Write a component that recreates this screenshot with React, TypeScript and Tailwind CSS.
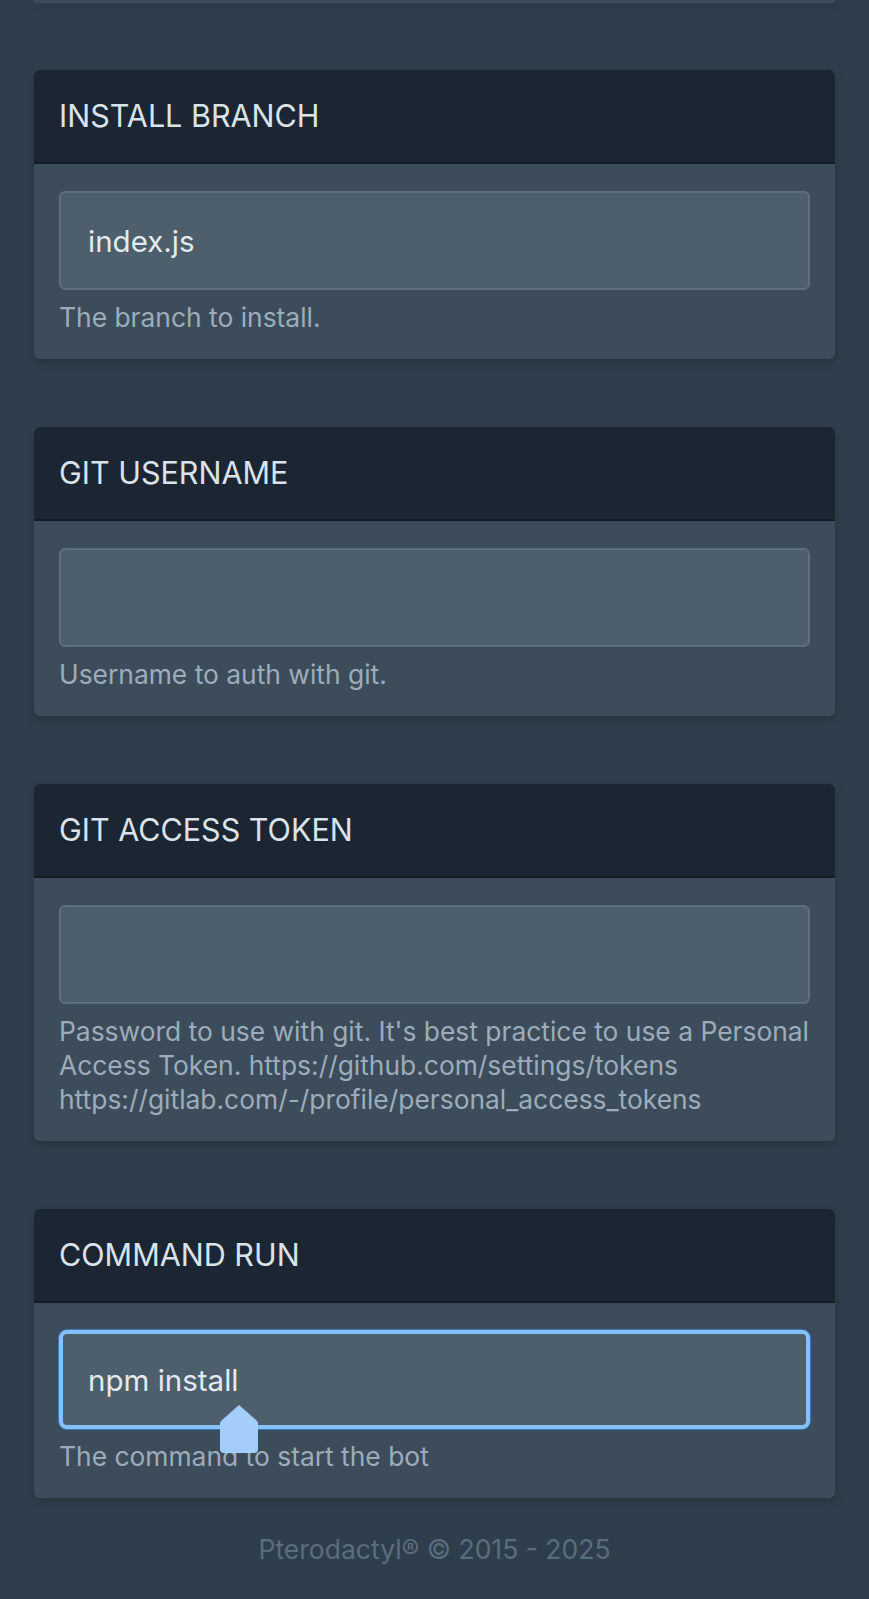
import { ReactNode } from "react";

type FieldProps = {
  title: string;
  value?: string;
  help: ReactNode;
  focused?: boolean;
};

function Field({ title, value, help, focused }: FieldProps) {
  return (
    <div className="rounded-[6px] bg-[#3c4c5a] shadow-[0_4px_10px_rgba(0,0,0,0.18)] overflow-visible">
      <div className="h-[94px] flex items-center px-[25px] bg-[#1b2632] rounded-t-[6px] border-b-2 border-[#131c25]">
        <h3 className="text-[30.5px] text-[#dbe3ea]">{title}</h3>
      </div>
      <div className="px-[25px] pt-[27px] pb-[25px]">
        <div className="relative">
          <input
            type="text"
            defaultValue={value}
            readOnly
            className={
              focused
                ? "w-full h-[99px] rounded-[8px] bg-[#4d5e6d] border-4 border-[#85c0fa] ring-1 ring-[#3d78b5] px-[25px] text-[29.5px] text-[#e4eaef] outline-none"
                : "w-full h-[99px] rounded-[6px] bg-[#4d5e6d] border-2 border-[#5d6e7d] px-[27px] text-[29.5px] text-[#e4eaef] outline-none"
            }
          />
          {focused && (
            <svg
              className="absolute left-[160px] top-[74px]"
              width="40"
              height="50"
              viewBox="0 0 40 50"
            >
              <path
                d="M20 1 L38 17 Q39 18 39 20 L39 45 Q39 49 35 49 L5 49 Q1 49 1 45 L1 20 Q1 18 2 17 Z"
                fill="#a5cdfb"
              />
            </svg>
          )}
        </div>
        <p className="mt-[10px] text-[26.4px] leading-[34px] text-[#9cacba]">{help}</p>
      </div>
    </div>
  );
}

export default function App() {
  return (
    <div
      className="min-h-[1599px] bg-[#2f3e4c] px-[34px]"
      style={{ fontFamily: "Inter, 'Noto Sans', sans-serif" }}
    >
      <div className="h-[3px] bg-[#3c4c5a] rounded-b-[6px] shadow-[0_4px_10px_rgba(0,0,0,0.18)]" />
      <div className="flex flex-col gap-[68px] pt-[67px]">
        <Field title="INSTALL BRANCH" value="index.js" help="The branch to install." />
        <Field title="GIT USERNAME" value="" help="Username to auth with git." />
        <Field
          title="GIT ACCESS TOKEN"
          value=""
          help={
            <>
              Password to use with git. It's best practice to use a Personal
              <br />
              Access Token. https://github.com/settings/tokens
              <br />
              https://gitlab.com/-/profile/personal_access_tokens
            </>
          }
        />
        <Field
          title="COMMAND RUN"
          value="npm install"
          help="The command to start the bot"
          focused
        />
      </div>
      <footer className="pt-[33px] pb-[32px] text-center text-[26.5px] leading-[36px] text-[#5a6d7e]">
        Pterodactyl® © 2015 - 2025
      </footer>
    </div>
  );
}
